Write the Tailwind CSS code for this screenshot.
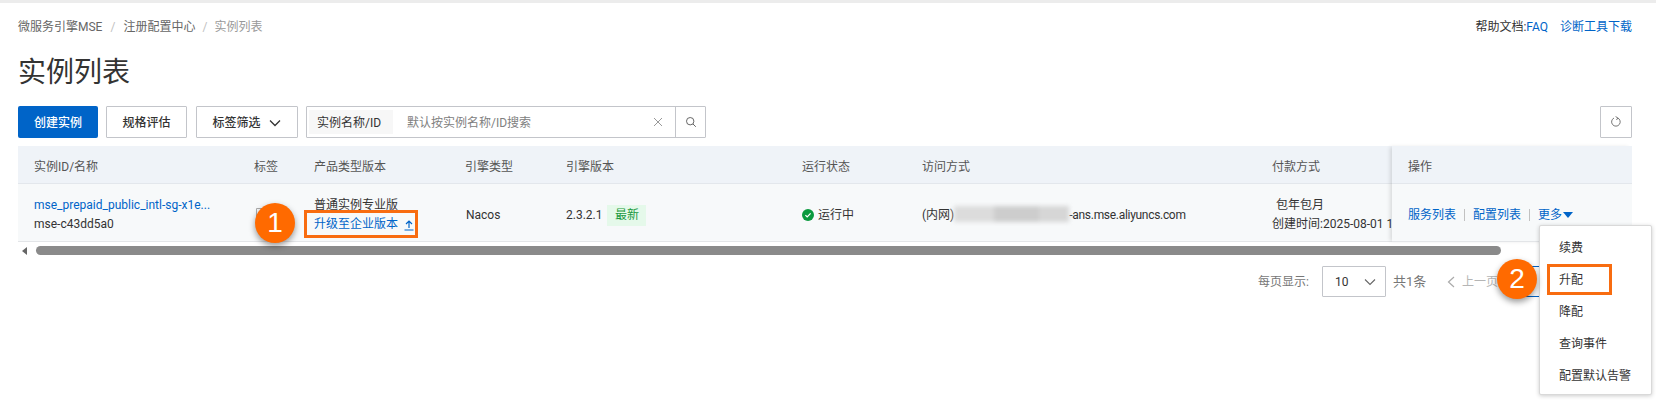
<!DOCTYPE html>
<html lang="zh-CN">
<head>
  <meta charset="UTF-8" />
  <title>实例列表</title>
  <script src="https://cdn.jsdelivr.net/npm/@tailwindcss/browser@4"></script>
</head>
<body class="bg-white font-['Roboto','Noto_Sans_CJK_SC',sans-serif] text-xs text-[#333] h-[413px] overflow-hidden relative">

  <div class="h-[3px] bg-[#ececec]"></div>

  <div class="pl-[18px] pr-[24px]">
    <!-- Breadcrumb -->
    <div class="flex justify-between items-center h-[18px] mt-[15px]">
      <div class="flex items-center text-[#666]">
        <span>微服务引擎MSE</span>
        <span class="w-[21px] text-center text-[#c1c1c1]">/</span>
        <span>注册配置中心</span>
        <span class="w-[19px] text-center text-[#c1c1c1]">/</span>
        <span class="text-[#999]">实例列表</span>
      </div>
      <div class="flex items-center">
        <span>帮助文档:</span><span class="text-[#0064c8]">FAQ</span>
        <span class="text-[#0064c8] ml-[12px]">诊断工具下载</span>
      </div>
    </div>

    <!-- Title -->
    <h1 class="text-[28px] leading-[40px] mt-[17px] h-[40px] text-[#333] font-normal">实例列表</h1>

    <!-- Toolbar -->
    <div class="flex items-center mt-[13px] h-[32px]">
      <button class="w-[80px] h-[32px] pt-[2px] bg-[#0064c8] text-white font-medium rounded-[2px]">创建实例</button>
      <button class="w-[81px] h-[32px] pt-[2px] ml-[8px] border border-[#c3c5ca] bg-white font-medium text-[#333] rounded-[1px]">规格评估</button>
      <button class="w-[102px] h-[32px] pt-[2px] ml-[9px] border border-[#c3c5ca] bg-white font-medium text-[#333] rounded-[1px] flex items-center justify-center gap-[7px]">
        标签筛选
        <svg class="w-[14px] h-[14px]" viewBox="0 0 14 14" fill="none" stroke="#333" stroke-width="1.3"><path d="M2 4.5l5 5 5-5"/></svg>
      </button>
      <div class="w-[400px] h-[32px] ml-[8px] border border-[#c3c5ca] flex items-center rounded-[1px]">
        <span class="w-[84px] h-[24px] ml-[2px] pt-[1px] bg-[#f7f7f7] flex items-center pl-[8px]">实例名称/ID</span>
        <span class="ml-[14px] pt-[2px] flex-1 text-[#808080]">默认按实例名称/ID搜索</span>
        <svg class="w-[12px] h-[12px] mr-[11px]" viewBox="0 0 12 12" fill="none" stroke="#999" stroke-width="1"><path d="M2 2l8 8M10 2l-8 8"/></svg>
        <div class="w-[30px] h-full border-l border-[#c3c5ca] flex items-center justify-center">
          <svg class="w-[12px] h-[12px]" viewBox="0 0 12 12" fill="none" stroke="#666" stroke-width="1"><circle cx="5.2" cy="5.2" r="3.7"/><path d="M8 8l2.8 2.8"/></svg>
        </div>
      </div>
      <button class="w-[32px] h-[32px] ml-auto border border-[#c3c5ca] flex items-center justify-center rounded-[1px]">
        <svg class="w-[12px] h-[12px]" viewBox="0 0 12 12" fill="none" stroke="#777" stroke-width="1"><path d="M7.6 1.9A4.3 4.3 0 1 1 4 2"/><path d="M5.6 .6l2.2 1.3L6.5 4"/></svg>
      </button>
    </div>

    <!-- Table -->
    <div class="flex mt-[8px] relative">
      <div class="flex-1 min-w-0 overflow-hidden">
        <div class="flex h-[38px] pt-[4px] items-center bg-[#eff3f8] border-b border-[#e3e7ec] text-[#555] w-[1374px]">
          <div class="w-[236px] pl-[16px]">实例ID/名称</div>
          <div class="w-[60px]">标签</div>
          <div class="w-[151px]">产品类型版本</div>
          <div class="w-[101px]">引擎类型</div>
          <div class="w-[236px]">引擎版本</div>
          <div class="w-[120px]">运行状态</div>
          <div class="w-[350px]">访问方式</div>
          <div class="w-[120px]">付款方式</div>
        </div>
        <div class="flex h-[58px] pt-[5px] items-center bg-[#f7f9fa] border-b border-[#e3e5e8] w-[1374px] whitespace-nowrap">
          <div class="w-[236px] pl-[16px] leading-[19px]">
            <div class="text-[#0064c8]">mse_prepaid_public_intl-sg-x1e...</div>
            <div>mse-c43dd5a0</div>
          </div>
          <div class="w-[60px] pl-[2px]">
            <svg class="w-[12px] h-[14px]" viewBox="0 0 12 14" fill="none" stroke="#aaa" stroke-width="1"><path d="M.5.5h11v13H.5z"/></svg>
          </div>
          <div class="w-[151px] leading-[19px]">
            <div>普通实例专业版</div>
            <div class="text-[#0064c8] flex items-center gap-[6px]">升级至企业版本
              <svg class="w-[10px] h-[12px]" viewBox="0 0 10 12" fill="none" stroke="#0064c8" stroke-width="1.2"><path d="M5 9V2M2 5l3-3 3 3M.5 11h9"/></svg>
            </div>
          </div>
          <div class="w-[101px] pl-[1px]">Nacos</div>
          <div class="w-[236px] flex items-center">
            2.3.2.1
            <span class="ml-[5px] w-[39px] h-[21px] bg-[#e5f9ea] text-[#1a9a3f] flex items-center justify-center">最新</span>
          </div>
          <div class="w-[120px] flex items-center gap-[4px]">
            <svg class="w-[12px] h-[12px]" viewBox="0 0 12 12"><circle cx="6" cy="6" r="6" fill="#0a9a3e"/><path d="M3.4 6.2l1.8 1.8 3.4-3.6" fill="none" stroke="#fff" stroke-width="1.2"/></svg>
            运行中
          </div>
          <div class="w-[350px] flex items-center">
            <span>(内网)</span>
            <span class="w-[115px] h-[16px] flex blur-[2px] mb-[3px]">
              <span class="w-[40px] bg-[#dcdcdc]"></span>
              <span class="w-[45px] bg-[#cdcdcd]"></span>
              <span class="w-[30px] bg-[#d6d6d6]"></span>
            </span>
            <span class="tracking-[-0.3px]">-ans.mse.aliyuncs.com</span>
          </div>
          <div class="w-[120px] leading-[19px]">
            <div class="pl-[4px]">包年包月</div>
            <div>创建时间:2025-08-01 1</div>
          </div>
        </div>
      </div>

      <!-- Fixed action column -->
      <div class="w-[240px] shrink-0 shadow-[-3px_0_4px_-1px_rgba(0,0,0,0.12)] relative z-10">
        <div class="h-[38px] pt-[4px] flex items-center pl-[16px] bg-[#eff3f8] border-b border-[#e3e7ec] text-[#555]">操作</div>
        <div class="h-[58px] pt-[4px] flex items-center pl-[16px] bg-[#f7f9fa] border-b border-[#e3e5e8] text-[#0064c8]">
          <span>服务列表</span>
          <span class="w-px h-[12px] bg-[#c1c1c1] mx-[8px]"></span>
          <span>配置列表</span>
          <span class="w-px h-[12px] bg-[#c1c1c1] mx-[8px]"></span>
          <span>更多</span>
          <svg class="w-[10px] h-[6px] ml-[1px]" viewBox="0 0 10 6"><path d="M0 0h10L5 6z" fill="#0064c8"/></svg>
        </div>
      </div>
    </div>

    <!-- Scrollbar -->
    <div class="flex items-center h-[9px] mt-[4px]">
      <svg class="w-[6px] h-[8px] ml-[4px]" viewBox="0 0 6 8"><path d="M5 0v8L0 4z" fill="#666"/></svg>
      <div class="ml-[8px] w-[1465px] h-[9px] rounded-full bg-[#8a8a8a]"></div>
    </div>

    <!-- Pagination -->
    <div class="flex items-center h-[31px] mt-[11px] ml-[1240px] whitespace-nowrap text-[#777]">
      <span class="w-[64px]">每页显示:</span>
      <div class="w-[64px] h-[31px] border border-[#c3c5ca] rounded-[1px] flex items-center justify-between pl-[12px] pr-[9px] text-[#333]">
        10
        <svg class="w-[12px] h-[12px]" viewBox="0 0 12 12" fill="none" stroke="#666" stroke-width="1.1"><path d="M1 3.5l5 5 5-5"/></svg>
      </div>
      <span class="ml-[7px] w-[54px] text-[13px]">共1条</span>
      <svg class="w-[8px] h-[12px] text-[#aaa]" viewBox="0 0 8 12" fill="none" stroke="currentColor" stroke-width="1.2"><path d="M7 1L1.5 6 7 11"/></svg>
      <span class="ml-[7px] text-[#b5b5b5] w-[48px]">上一页</span>
      <div class="w-[32px] h-[31px] border border-[#0064c8]"></div>
    </div>
  </div>

  <!-- Dropdown menu -->
  <div class="absolute left-[1539px] top-[225px] w-[113px] h-[170px] bg-white border border-[#d9d9d9] rounded-[2px] shadow-[0_1px_4px_rgba(0,0,0,0.2)] z-20 pl-[19px] pt-[6px] flex flex-col text-[#333]">
    <div class="h-[32px] flex items-center">续费</div>
    <div class="h-[32px] flex items-center">升配</div>
    <div class="h-[32px] flex items-center">降配</div>
    <div class="h-[32px] flex items-center">查询事件</div>
    <div class="h-[32px] flex items-center">配置默认告警</div>
  </div>

  <!-- Annotations -->
  <div class="absolute left-[304px] top-[210px] w-[114px] h-[28px] border-[3px] border-[#f86c10] z-30"></div>
  <div class="absolute left-[255px] top-[203px] w-[40px] h-[40px] rounded-full bg-[#ff6a00] text-white text-[28px] flex items-center justify-center shadow-[0_3px_6px_rgba(0,0,0,0.4)] z-30 font-['Liberation_Sans',sans-serif]">1</div>
  <div class="absolute left-[1547px] top-[264px] w-[65px] h-[31px] border-[3px] border-[#f86c10] z-30"></div>
  <div class="absolute left-[1497px] top-[259px] w-[40px] h-[40px] rounded-full bg-[#ff6a00] text-white text-[28px] flex items-center justify-center shadow-[0_3px_6px_rgba(0,0,0,0.4)] z-30 font-['Liberation_Sans',sans-serif]">2</div>

</body>
</html>
